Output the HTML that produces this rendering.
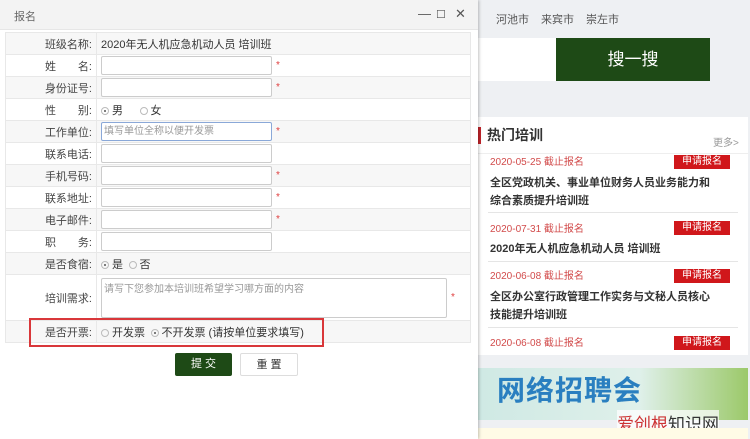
<!DOCTYPE html>
<html><head><meta charset="utf-8"><style>
*{margin:0;padding:0;box-sizing:border-box}
body{width:750px;height:439px;overflow:hidden;background:#eef0f3;font-family:"Liberation Sans","Noto Sans CJK SC",sans-serif;font-size:11px;color:#333;position:relative}
.dlg{position:absolute;left:0;top:0;width:478px;height:439px;background:#fff;box-shadow:1px 0 3px rgba(0,0,0,.25)}
.tb{height:30px;background:#f3f3f3;border-bottom:1px solid #e6e6e6;position:relative}
.tb span{position:absolute;left:14px;top:8px;color:#666;font-size:11px}
.tb .ic{position:absolute;top:6px;font-size:13px;color:#555}
table{position:absolute;left:5px;top:32px;width:466px;border-collapse:collapse}
td{border:1px solid #e8e8e8;height:22px;font-size:11px;vertical-align:middle}
tr:nth-child(odd) td{background:#f7f7f7}
td.l{width:91px;text-align:right;padding-right:4px;color:#444}
td.v{padding-left:4px}
.in{display:inline-block;width:171px;height:19px;border:1px solid #ccc;background:#fff;vertical-align:middle;border-radius:2px;color:#999;font-size:10px;line-height:17px;padding-left:2px}
.st{color:#e04040;margin-left:4px;font-size:10px}
.rd{display:inline-block;width:8px;height:8px;border:1px solid #bbb;border-radius:50%;vertical-align:middle;margin-right:3px;position:relative}
.rd.on:after{content:"";position:absolute;left:2px;top:2px;width:2px;height:2px;border-radius:50%;background:#555}
.ta{display:inline-block;width:346px;height:40px;border:1px solid #ccc;background:#fff;color:#999;font-size:10px;padding:1px 2px;border-radius:2px;vertical-align:middle}
.box{position:absolute;left:29px;top:318px;width:295px;height:29px;border:2px solid #d9373a}
.btn{position:absolute;top:353px;height:23px;width:57px;text-align:center;line-height:23px;font-size:11px;border-radius:2px}
.nav{position:absolute;top:11px;font-size:11px;color:#555}
.red{color:#d24b4b;font-size:10px}
.tag{position:absolute;left:674px;width:56px;height:14px;background:#d0171b;color:#fff;font-size:10px;text-align:center;line-height:14px}
.ti{position:absolute;left:490px;font-size:11px;font-weight:bold;color:#333;line-height:18px;width:250px}
.hr{position:absolute;left:488px;width:250px;border-top:1px solid #e5e5e5}
</style></head><body>
<div class="nav" style="left:496px">河池市</div>
<div class="nav" style="left:541px">来宾市</div>
<div class="nav" style="left:586px">崇左市</div>
<div style="position:absolute;left:478px;top:38px;width:78px;height:43px;background:#fff"></div>
<div style="position:absolute;left:556px;top:38px;width:154px;height:43px;background:#1e4a16;color:#fff;font-size:17px;text-align:center;line-height:43px">搜一搜</div>
<div style="position:absolute;left:478px;top:117px;width:270px;height:238px;background:#fff"></div>
<div style="position:absolute;left:478px;top:127px;width:3px;height:17px;background:#c0242a"></div>
<div style="position:absolute;left:487px;top:125px;font-size:14px;font-weight:bold;color:#333">热门培训</div>
<div style="position:absolute;left:713px;top:134px;font-size:10px;color:#999">更多&gt;</div>
<div style="position:absolute;left:478px;top:153px;width:270px;border-top:1px solid #eee"></div>
<div class="red" style="position:absolute;left:490px;top:153px">2020-05-25 截止报名</div><div class="tag" style="top:155px">申请报名</div>
<div class="ti" style="top:174px">全区党政机关、事业单位财务人员业务能力和<br>综合素质提升培训班</div>
<div class="hr" style="top:212px"></div>
<div class="red" style="position:absolute;left:490px;top:220px">2020-07-31 截止报名</div><div class="tag" style="top:221px">申请报名</div>
<div class="ti" style="top:240px">2020年无人机应急机动人员 培训班</div>
<div class="hr" style="top:261px"></div>
<div class="red" style="position:absolute;left:490px;top:267px">2020-06-08 截止报名</div><div class="tag" style="top:269px">申请报名</div>
<div class="ti" style="top:288px">全区办公室行政管理工作实务与文秘人员核心<br>技能提升培训班</div>
<div class="hr" style="top:327px"></div>
<div class="red" style="position:absolute;left:490px;top:334px">2020-06-08 截止报名</div><div class="tag" style="top:336px">申请报名</div>
<div style="position:absolute;left:478px;top:368px;width:270px;height:52px;background:linear-gradient(90deg,#cfe9e4,#dff0ea 60%,#9cc96a)"></div>
<div style="position:absolute;left:497px;top:369px;font-size:28px;font-weight:bold;color:#2a7fc0;letter-spacing:1px">网络招聘会</div>
<div style="position:absolute;left:617px;top:410px;font-size:17px;color:#c33;background:rgba(255,255,255,.7)">爱创根<span style="color:#333">知识网</span></div>
<div style="position:absolute;left:478px;top:428px;width:270px;height:11px;background:#fffbe6"></div>
<div class="dlg">
<div class="tb"><span>报名</span><span class="ic" style="left:418px">—</span><span class="ic" style="left:436px;font-size:11px;top:8px">☐</span><span class="ic" style="left:455px">✕</span></div>
<table>
<tr><td class="l">班级名称:</td><td class="v">2020年无人机应急机动人员 培训班</td></tr>
<tr><td class="l">姓&emsp;&emsp;名:</td><td class="v"><span class="in"></span><span class="st">*</span></td></tr>
<tr><td class="l">身份证号:</td><td class="v"><span class="in"></span><span class="st">*</span></td></tr>
<tr><td class="l">性&emsp;&emsp;别:</td><td class="v"><span class="rd on"></span>男&emsp;&ensp;<span class="rd"></span>女</td></tr>
<tr><td class="l">工作单位:</td><td class="v"><span class="in" style="border-color:#8aa8d8">填写单位全称以便开发票</span><span class="st">*</span></td></tr>
<tr><td class="l">联系电话:</td><td class="v"><span class="in"></span></td></tr>
<tr><td class="l">手机号码:</td><td class="v"><span class="in"></span><span class="st">*</span></td></tr>
<tr><td class="l">联系地址:</td><td class="v"><span class="in"></span><span class="st">*</span></td></tr>
<tr><td class="l">电子邮件:</td><td class="v"><span class="in"></span><span class="st">*</span></td></tr>
<tr><td class="l">职&emsp;&emsp;务:</td><td class="v"><span class="in"></span></td></tr>
<tr><td class="l">是否食宿:</td><td class="v"><span class="rd on"></span>是&ensp;<span class="rd"></span>否</td></tr>
<tr><td class="l" style="height:46px">培训需求:</td><td class="v"><span class="ta">请写下您参加本培训班希望学习哪方面的内容</span><span class="st">*</span></td></tr>
<tr><td class="l">是否开票:</td><td class="v"><span class="rd"></span>开发票&ensp;<span class="rd on"></span>不开发票 (请按单位要求填写)</td></tr>
</table>
<div class="box"></div>
<div class="btn" style="left:175px;background:#1e4a16;color:#fff">提 交</div>
<div class="btn" style="left:240px;width:58px;border:1px solid #ddd;background:#fff">重 置</div>
</div>
</body></html>
